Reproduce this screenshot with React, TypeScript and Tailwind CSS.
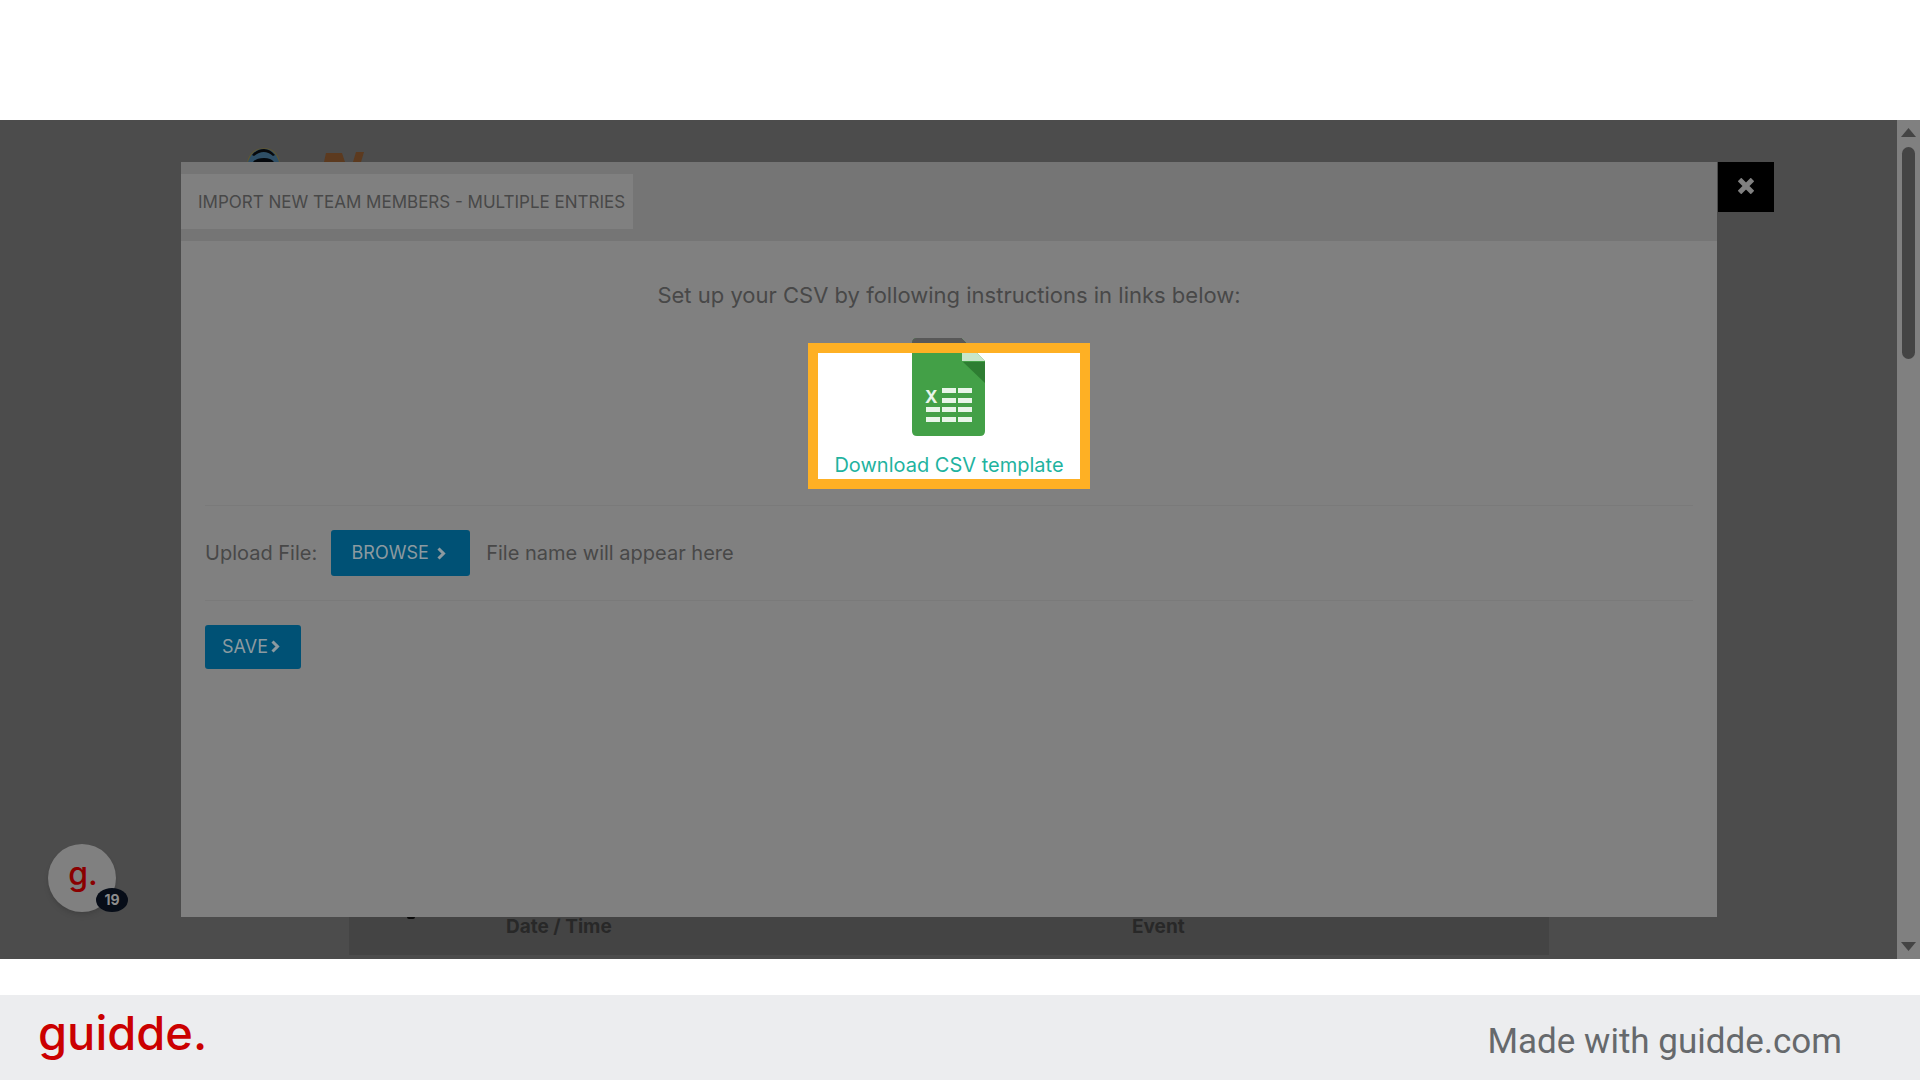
import React, { useRef, useState } from 'react'
import clsx from 'clsx';

const cells = [
    [30, 50], [46, 50],
    [30, 60], [46, 60],
    [14, 69], [30, 69], [46, 69],
    [14, 79], [30, 79], [46, 79],
];

const columns = [
    { label: 'Date / Time', className: 'w-[627px] pl-[157px]' },
    { label: 'Event', className: 'pl-[156px]' },
];

const Chevron = () => (
    <svg width="9" height="13" viewBox="0 0 9 13" fill="none" stroke="currentColor" strokeWidth="3" aria-hidden="true">
        <path d="M1.5 1.5L6.5 6.5L1.5 11.5" />
    </svg>
);

const SheetIcon = () => (
    <svg width="74" height="98" viewBox="0 0 74 98" aria-hidden="true">
        <path d="M5 0H50L73 23V93Q73 98 68 98H5Q0 98 0 93V5Q0 0 5 0Z" fill="#43a047" />
        <path d="M50 0L73 23H50Z" fill="#c8e6c9" />
        <path d="M51 24H73V45Z" fill="#2e7d32" />
        <path d="M5 0H50L56 6H0V5Q0 0 5 0Z" fill="#585858" />
        <text x="13" y="65" fontSize="17" fontWeight="700" fill="#e8f5e9" fontFamily="Inter, sans-serif">X</text>
        {cells.map(([x, y]) => (
            <rect key={`${x}-${y}`} x={x} y={y} width="14" height="5" fill="#e8f5e9" />
        ))}
    </svg>
);

const SiteHeader = () => (
    <header className="h-[42px] overflow-hidden pl-[247px] pt-7">
        <svg width="120" height="14" viewBox="0 0 120 14" aria-hidden="true">
            <path d="M0 14Q3 0 17 0Q30 0 33 14Z" fill="#5c5636" />
            <path d="M1 14Q5 1 17 1Q28 1 32 14Z" fill="#2f4f66" />
            <path d="M5 7Q10 1 17 1Q23 1 28 7L26 8Q17 0 7 8Z" fill="#07090c" />
            <path d="M6 14Q9 10 17 10Q24 10 27 14Z" fill="#05080c" />
            <path d="M79 5H95L98 14H77Z" fill="#5c3a1f" />
            <path d="M109 4H117L114 14H106Z" fill="#5c3a1f" />
        </svg>
    </header>
);

const Scrollbar = () => (
    <div className="flex w-[23px] shrink-0 flex-col items-center bg-[#808080] pb-2 pt-2" aria-hidden="true">
        <svg width="15" height="9" viewBox="0 0 15 9" fill="#444444"><path d="M7.5 0L15 9H0Z" /></svg>
        <div className="mt-[10px] h-[212px] w-[13px] rounded-full bg-[#444444]" />
        <svg className="mt-auto" width="15" height="9" viewBox="0 0 15 9" fill="#444444"><path d="M0 0H15L7.5 9Z" /></svg>
    </div>
);

const ImportModal = () => {
    const inputRef = useRef<HTMLInputElement>(null);
    const [fileName, setFileName] = useState('');
    const [open, setOpen] = useState(true);

    return (
        <div
            role="dialog"
            aria-labelledby="import-title"
            className={clsx('relative ml-[181px] mr-[180px] h-[755px] bg-[#808080] text-[#484848]', !open && 'invisible')}
        >
            <button
                type="button"
                aria-label="Close"
                onClick={() => setOpen(false)}
                className="absolute left-full top-0 ml-px flex h-[50px] w-14 items-center justify-center bg-black pb-[2px] text-[#808080]"
            >
                <svg width="16" height="16" viewBox="0 0 16 16" stroke="currentColor" strokeWidth="5" aria-hidden="true">
                    <path d="M1.5 1.5L14.5 14.5M14.5 1.5L1.5 14.5" />
                </svg>
            </button>
            <div className="flex bg-[#757575] py-3">
                <h2 id="import-title" className="bg-[#808080] pl-[17px] pr-2 pt-px text-[17px] leading-[54px]">
                    IMPORT NEW TEAM MEMBERS - MULTIPLE ENTRIES
                </h2>
            </div>
            <div className="px-6">
                <div className="flex flex-col items-center pt-[38px]">
                    <p className="text-[22px] leading-8">Set up your CSV by following instructions in links below:</p>
                    <a href="#template" className="relative mt-[27px] flex w-[262px] flex-col items-center text-xl text-[#1fb3a0]">
                        <span className="absolute inset-x-0 bottom-0 top-[15px] bg-white" />
                        <span className="relative"><SheetIcon /></span>
                        <span className="relative mt-[15px] leading-7">Download CSV template</span>
                        <span className="pointer-events-none absolute -inset-x-[10px] -bottom-[10px] top-[5px] border-[10px] border-[#feb024]" />
                    </a>
                </div>
                <form onSubmit={(e) => e.preventDefault()}>
                    <div className="mt-[26px] flex items-center border-y border-[#7a7a7a] py-6 text-xl">
                        <label htmlFor="csv-file">Upload File:</label>
                        <input
                            ref={inputRef}
                            id="csv-file"
                            type="file"
                            accept=".csv"
                            className="hidden"
                            onChange={(e) => setFileName(e.target.files?.[0]?.name ?? '')}
                        />
                        <button
                            type="button"
                            onClick={() => inputRef.current?.click()}
                            className="ml-[14px] flex h-[46px] w-[139px] items-center justify-center gap-2 rounded-[3px] bg-[#005175] pr-1 text-lg text-[#8c9aa0]"
                        >
                            BROWSE <Chevron />
                        </button>
                        <span className="ml-4">{fileName || 'File name will appear here'}</span>
                    </div>
                    <button type="submit" className="mt-6 flex h-11 w-24 items-center justify-center gap-[3px] rounded-[3px] bg-[#005175] pb-px pr-1 text-lg text-[#8c9aa0]">
                        SAVE <Chevron />
                    </button>
                </form>
            </div>
        </div>
    );
};

const EventsTable = () => (
    <div className="relative ml-[349px] mr-[348px] h-[42px]">
        <span className="absolute left-[58px] top-0 h-[2px] w-2 rounded-b bg-[#0a0a0a]" />
        <table className="w-full table-fixed bg-[#444444]">
            <thead>
                <tr>
                    {columns.map((col) => (
                        <th key={col.label} className={clsx('h-[38px] pb-[18px] text-left text-[19px] leading-5 font-bold text-[#282828]', col.className)}>{col.label}</th>
                    ))}
                </tr>
            </thead>
        </table>
    </div>
);

const HelpWidget = () => (
    <button
        type="button"
        aria-label="Guides"
        className="absolute bottom-[47px] left-12 flex size-[68px] items-center justify-center rounded-full bg-[#808080] pb-2 pl-[2px] text-[32px] font-medium leading-none text-[#8a0000] shadow-md"
    >
        g.
        <span className="absolute -right-3 bottom-0 flex h-6 w-8 items-center justify-center rounded-[50%] bg-[#070d18] text-sm font-bold text-[#8c8c8c]">19</span>
    </button>
);

const App = () => {
    return (
        <div className="flex min-h-screen flex-col bg-white pt-[120px] font-[Inter,sans-serif]">
            <main className="relative flex bg-[#4c4c4c]">
                <div className="min-w-0 flex-1">
                    <SiteHeader />
                    <ImportModal />
                    <EventsTable />
                </div>
                <Scrollbar />
                <HelpWidget />
            </main>
            <footer className="mt-9 flex flex-1 items-center justify-between bg-[#ecedef] pl-[38px] pr-[78px]">
                <span className="pb-[10px] text-[47px] font-medium leading-none text-[#cb0000]">guidde.</span>
                <span className="pt-2 font-[Roboto,sans-serif] text-[35px] leading-none text-[#66696c]">Made with guidde.com</span>
            </footer>
        </div>
    )
}

export default App
